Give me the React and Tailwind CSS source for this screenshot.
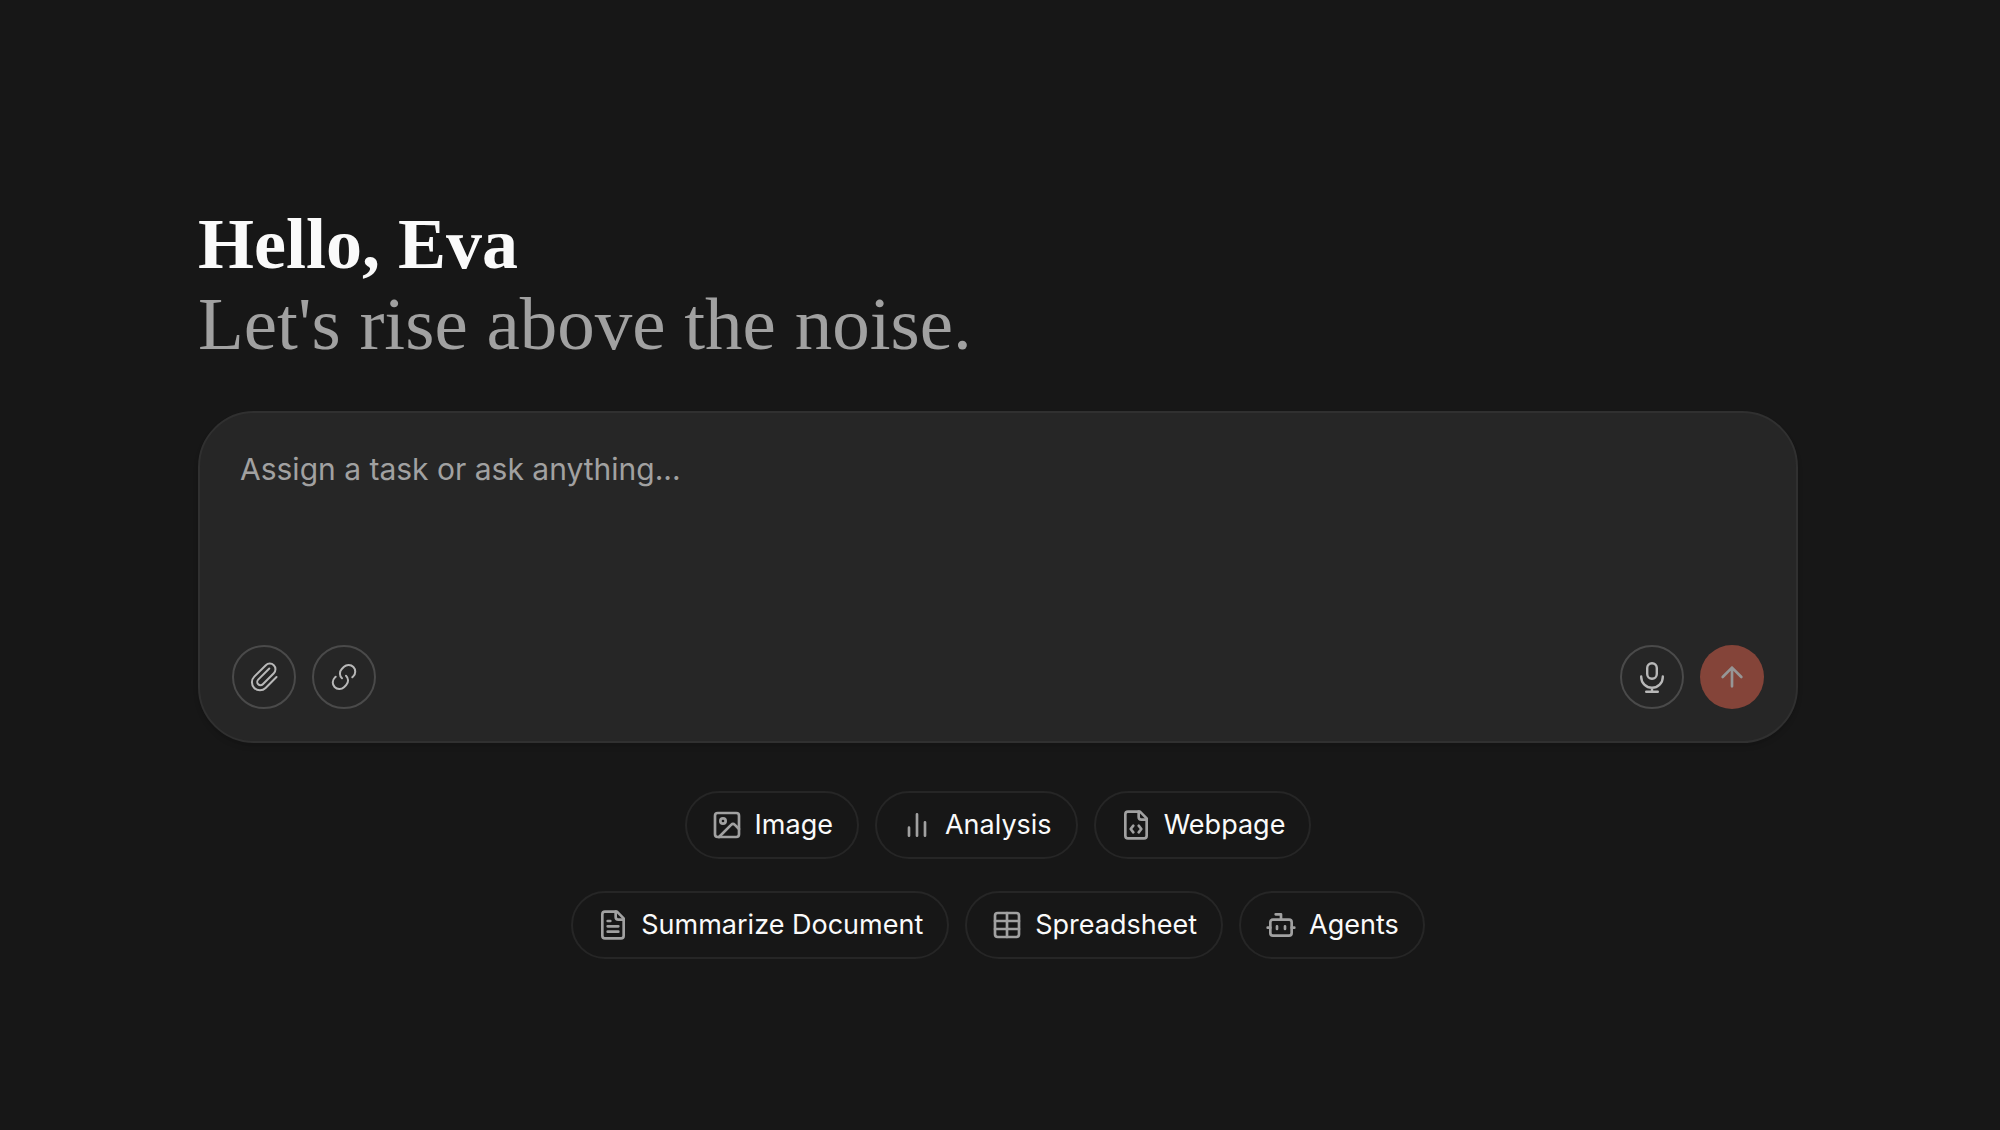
import React from "react";

function Icon({ children, viewBox = "0 0 24 24", strokeWidth = 2 }) {
  return (
    <svg
      className="size-8 shrink-0"
      viewBox={viewBox}
      fill="none"
      stroke="currentColor"
      strokeWidth={strokeWidth}
      strokeLinecap="round"
      strokeLinejoin="round"
      aria-hidden="true"
    >
      {children}
    </svg>
  );
}

const PaperclipIcon = () => (
  <Icon viewBox="0 0 32 32">
    <path d="M28.5 16 17.6 27A8 8 0 0 1 6.3 15.6L17.8 4.2A5.6 5.6 0 0 1 25.8 12.2L14.8 23.2A3.2 3.2 0 0 1 10.2 18.6L21.3 7.5" />
  </Icon>
);

const LinkIcon = () => (
  <Icon viewBox="0 0 32 32">
    <path d="M24.3 16.3 25.2 15.4A6.5 6.5 0 0 0 16 5.8L13.8 8A6.5 6.5 0 0 0 14 17.3" />
    <path d="M7.7 15.7 6.8 16.6A6.5 6.5 0 0 0 16 26.2L18.2 24A6.5 6.5 0 0 0 18 14.7" />
  </Icon>
);

const MicIcon = () => (
  <Icon viewBox="0 0 32 32" strokeWidth={2.4}>
    <rect x="11.2" y="2.2" width="9.6" height="15.6" rx="4.8" />
    <path d="M5.2 15.5V16a10.8 10.8 0 0 0 21.6 0v-.5M16 27v3.8M10.2 30.8h11.6" />
  </Icon>
);

const ArrowIcon = () => (
  <Icon>
    <path d="m5 12 7-7 7 7M12 19V5" />
  </Icon>
);

const ImageIcon = () => (
  <Icon>
    <rect width="18" height="18" x="3" y="3" rx="2" />
    <circle cx="9" cy="9" r="2" />
    <path d="m21 15-3.086-3.086a2 2 0 0 0-2.828 0L6 21" />
  </Icon>
);

const BarsIcon = () => (
  <Icon>
    <path d="M18 20V10M12 20V4M6 20v-6" />
  </Icon>
);

const FileCodeIcon = () => (
  <Icon>
    <path d="M15 2H6a2 2 0 0 0-2 2v16a2 2 0 0 0 2 2h12a2 2 0 0 0 2-2V7Z" />
    <path d="M14 2v4a2 2 0 0 0 2 2h4M10 12.5 8 15l2 2.5M14 12.5l2 2.5-2 2.5" />
  </Icon>
);

const FileTextIcon = () => (
  <Icon>
    <path d="M15 2H6a2 2 0 0 0-2 2v16a2 2 0 0 0 2 2h12a2 2 0 0 0 2-2V7Z" />
    <path d="M14 2v4a2 2 0 0 0 2 2h4M10 9H8M16 13H8M16 17H8" />
  </Icon>
);

const TableIcon = () => (
  <Icon>
    <rect width="18" height="18" x="3" y="3" rx="2" />
    <path d="M12 3v18M3 9h18M3 15h18" />
  </Icon>
);

const BotIcon = () => (
  <Icon>
    <path d="M12 8V4H8" />
    <rect width="16" height="12" x="4" y="8" rx="2" />
    <path d="M2 14h2M20 14h2M15 13v2M9 13v2" />
  </Icon>
);

const rows = [
  [
    { label: "Image", Glyph: ImageIcon },
    { label: "Analysis", Glyph: BarsIcon },
    { label: "Webpage", Glyph: FileCodeIcon },
  ],
  [
    { label: "Summarize Document", Glyph: FileTextIcon },
    { label: "Spreadsheet", Glyph: TableIcon },
    { label: "Agents", Glyph: BotIcon },
  ],
];

function RoundButton({ label, children }) {
  return (
    <button
      type="button"
      aria-label={label}
      className="flex size-16 items-center justify-center rounded-full border-2 border-[#4a4a4a] text-[#b8b8b8]"
    >
      {children}
    </button>
  );
}

export default function App() {
  return (
    <main className="min-h-screen bg-[#171717] pt-51 pr-1 font-['Inter',sans-serif]">
      <div className="mx-auto max-w-[1600px]">
        <h1 className="font-['Liberation_Serif',serif] leading-20">
          <span className="block text-[72px] font-bold text-neutral-50">Hello, Eva</span>
          <span className="block text-[75px] font-normal text-[#a1a1a1]">Let's rise above the noise.</span>
        </h1>

        <form
          className="mt-[47px] rounded-[56px] border-2 border-[#303030] bg-[#262626] p-8 shadow-md"
          onSubmit={(e) => e.preventDefault()}
        >
          <textarea
            aria-label="Task"
            placeholder="Assign a task or ask anything..."
            className="block h-[200px] w-full resize-none bg-transparent px-2 pt-1 text-[30px] leading-10 text-neutral-50 outline-none placeholder:text-[#a1a1a1]"
          />
          <div className="flex items-center justify-between">
            <div className="flex gap-4">
              <RoundButton label="Attach file"><PaperclipIcon /></RoundButton>
              <RoundButton label="Add link"><LinkIcon /></RoundButton>
            </div>
            <div className="flex gap-4">
              <RoundButton label="Dictate"><MicIcon /></RoundButton>
              <button
                type="submit"
                aria-label="Send"
                className="flex size-16 items-center justify-center rounded-full bg-[#844439] text-[#969696]"
              >
                <ArrowIcon />
              </button>
            </div>
          </div>
        </form>

        <div className="mt-12 flex flex-col gap-8">
          {rows.map((row) => (
            <div key={row[0].label} className="flex flex-wrap justify-center gap-4">
              {row.map(({ label, Glyph }) => (
                <button
                  key={label}
                  type="button"
                  className="flex h-[68px] items-center gap-3 rounded-full border-2 border-[#262626] px-6 text-[27px] leading-8 text-neutral-50"
                >
                  <span className="text-[#a1a1a1]"><Glyph /></span>
                  {label}
                </button>
              ))}
            </div>
          ))}
        </div>
      </div>
    </main>
  );
}
